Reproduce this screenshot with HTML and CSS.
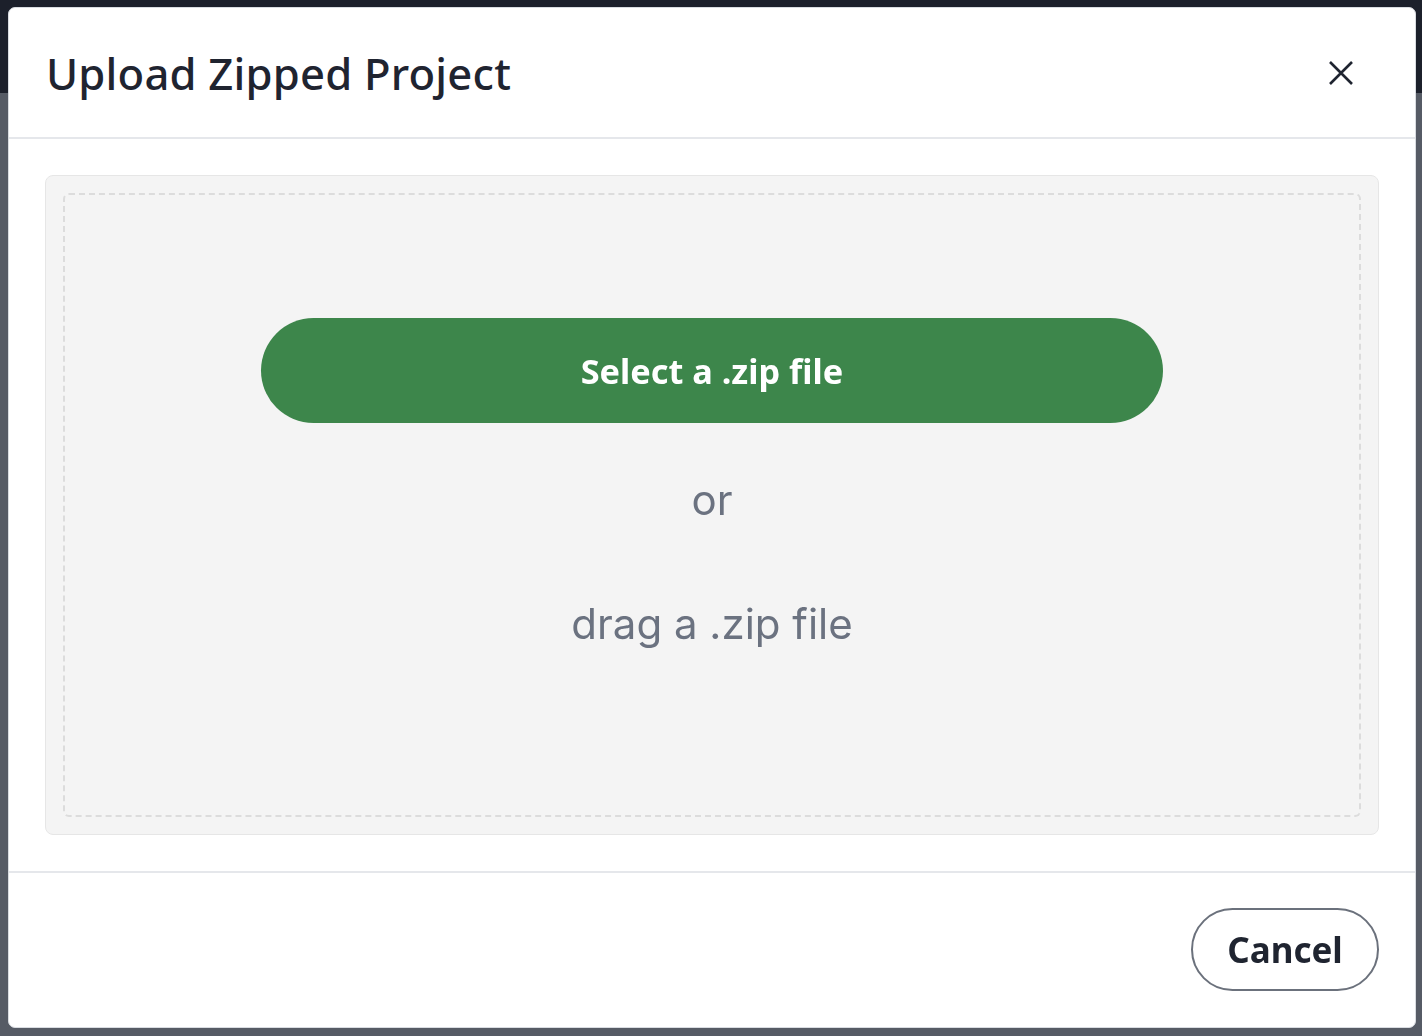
FILE: index.html
```html
<!DOCTYPE html>
<html>
<head>
<meta charset="utf-8">
<link rel="stylesheet" href="styles.css">
</head>
<body>
<div class="page">
  <div class="topbar"></div>
  <div class="rest"></div>
</div>
<div class="modal">
  <div class="modal-header">
    <h1 class="title">Upload Zipped Project</h1>
    <button class="close" aria-label="Close">
      <svg width="24" height="24" viewBox="0 0 24 24"><path d="M1 1 L23 23 M23 1 L1 23" stroke="#1f2430" stroke-width="2.6" fill="none"/></svg>
    </button>
  </div>
  <div class="modal-body">
    <div class="dropzone">
      <div class="dash">
        <button class="select">Select a .zip file</button>
        <div class="or">or</div>
        <div class="drag">drag a .zip file</div>
      </div>
    </div>
  </div>
  <div class="modal-footer">
    <button class="cancel">Cancel</button>
  </div>
</div>
</body>
</html>
```

FILE: styles.css
```css
html, body {
  margin: 0;
  padding: 0;
  height: 100%;
}
body {
  background: #565b65;
  font-family: "Noto Sans", sans-serif;
  overflow: hidden;
}
.page {
  height: 100%;
  display: flex;
  flex-direction: column;
}
.topbar {
  height: 93px;
  background: #1c202b;
}
.rest {
  flex: 1;
  background: #565b65;
}
.modal {
  position: fixed;
  left: 8px;
  top: 7px;
  width: 1406px;
  height: 1019px;
  background: #fff;
  border: 1px solid #d9dce1;
  border-radius: 7px;
  display: flex;
  flex-direction: column;
  box-sizing: content-box;
}
.modal-header {
  height: 131px;
  border-bottom: 2px solid #e5e7eb;
  display: flex;
  align-items: center;
  justify-content: space-between;
  padding: 0 62px 0 37px;
  box-sizing: border-box;
}
.title {
  margin: 0;
  font-size: 43.6px;
  font-weight: 500;
  color: #1f2430;
  letter-spacing: 0.2px;
}
.close {
  border: 0;
  background: none;
  padding: 0;
  width: 24px;
  height: 24px;
  display: flex;
}
.modal-body {
  padding: 36px 36px;
  border-bottom: 2px solid #e5e7eb;
}
.dropzone {
  height: 660px;
  background: #f4f4f4;
  border: 1px solid #e6e6e6;
  border-radius: 8px;
  padding: 17px;
  box-sizing: border-box;
}
.dash {
  height: 100%;
  border: 2px dashed #dcdcdc;
  border-radius: 6px;
  box-sizing: border-box;
  display: flex;
  flex-direction: column;
  align-items: center;
  padding-top: 123px;
}
.select {
  width: 902px;
  height: 105px;
  border: 0;
  border-radius: 53px;
  background: #3d864b;
  color: #fff;
  font-family: "Noto Sans", sans-serif;
  font-weight: 700;
  font-size: 34.3px;
}
.or, .drag {
  font-family: Inter, sans-serif;
  color: #6b7280;
  font-size: 42px;
  line-height: 50px;
}
.or {
  margin-top: 52px;
}
.drag {
  margin-top: 74px;
}
.modal-footer {
  flex: 1;
  display: flex;
  justify-content: flex-end;
  align-items: flex-start;
  padding: 35px 36px 0 0;
}
.cancel {
  width: 188px;
  height: 83px;
  border: 2px solid #6b717c;
  border-radius: 42px;
  background: #fff;
  color: #1f2430;
  font-family: "Noto Sans", sans-serif;
  font-weight: 700;
  font-size: 35px;
}
```
